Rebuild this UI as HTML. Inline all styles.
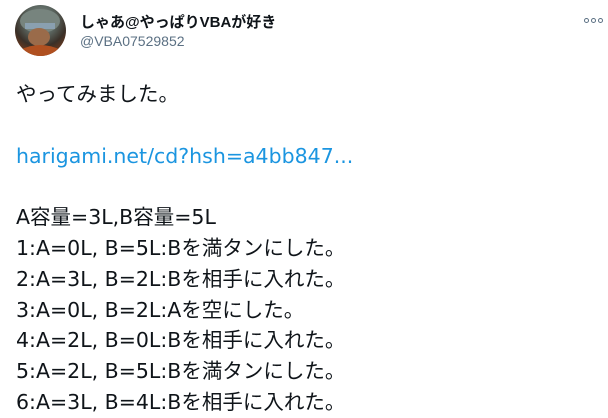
<!DOCTYPE html>
<html><head><meta charset="utf-8"><style>
body{margin:0;width:608px;height:417px;background:#fff;overflow:hidden;font-family:"Liberation Sans","Noto Sans CJK JP",sans-serif;position:relative}
.av{position:absolute;left:15px;top:5px;width:51px;height:51px;border-radius:50%;overflow:hidden;background:radial-gradient(circle at 50% 30%,#8a9590 0,#5b6660 35%,#3a3028 60%,#7a3a1a 85%)}
.name{position:absolute;left:80px;top:11px;font-size:15px;font-weight:bold;color:#0f1419}
.handle{position:absolute;left:80px;top:33px;font-size:14px;color:#5b7083}
.dots{position:absolute;left:584px;top:18px;display:flex;gap:2px}
.dots i{width:3px;height:3px;border:1px solid #5b7083;border-radius:50%}
.txt{position:absolute;left:16px;top:79px;font-family:"DejaVu Sans","Noto Sans CJK JP",sans-serif;font-size:20.5px;line-height:30.8px;color:#0f1419;white-space:pre}
a{color:#1b95e0;text-decoration:none}
</style></head><body>
<div class="av"><svg width="51" height="51"><ellipse cx="25" cy="16" rx="20" ry="12" fill="#77847e"/><rect x="10" y="18" width="30" height="6" fill="#8aa0b0"/><ellipse cx="24" cy="32" rx="11" ry="9" fill="#9a6b4a"/><path d="M5 45 Q25 35 46 45 L46 51 L5 51Z" fill="#b05020"/></svg></div>
<div class="name">しゃあ@やっぱりVBAが好き</div>
<div class="handle">@VBA07529852</div>
<div class="dots"><i></i><i></i><i></i></div>
<div class="txt">やってみました。

<a>harigami.net/cd?hsh=a4bb847...</a>

A容量=3L,B容量=5L
1:A=0L, B=5L:Bを満タンにした。
2:A=3L, B=2L:Bを相手に入れた。
3:A=0L, B=2L:Aを空にした。
4:A=2L, B=0L:Bを相手に入れた。
5:A=2L, B=5L:Bを満タンにした。
6:A=3L, B=4L:Bを相手に入れた。</div>
</body></html>
